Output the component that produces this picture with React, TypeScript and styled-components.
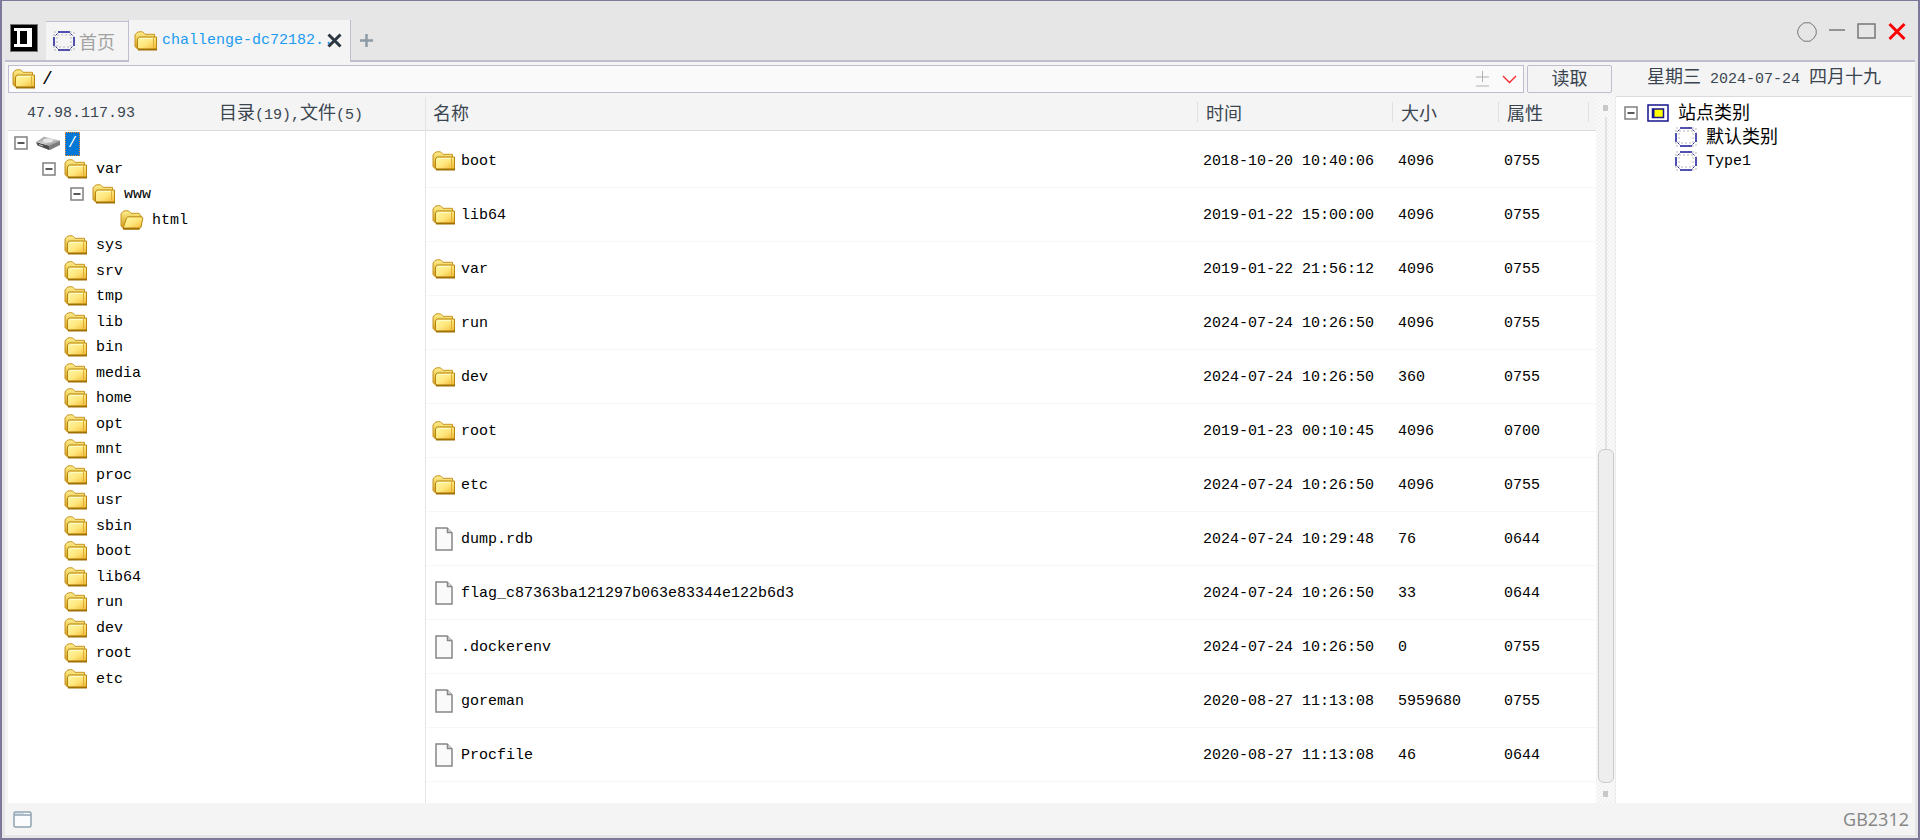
import React from "react";
import styled, { createGlobalStyle, css } from "styled-components";

const color = {
  frame: "#7c799b",
  line: "#c0bdd0",
  rule: "#dcdcde",
  bar: "#e6e6e6",
  panel: "#f4f4f4",
  text: "#3a4550",
};

const GlobalStyle = createGlobalStyle`
  *, *::before, *::after { box-sizing: border-box; }
  body {
    margin: 0;
    font: 15px/20px "Liberation Mono", "Noto Sans CJK SC", monospace;
    color: #000;
  }
  button, input { font: inherit; color: inherit; margin: 0; padding: 0; border: 0; background: none; }
  ul { list-style: none; margin: 0; padding: 0; }
  svg { display: block; flex: none; }
`;

const Window = styled.div`
  display: flex;
  flex-direction: column;
  min-height: 100vh;
  border: 2px solid ${color.frame};
  border-top-width: 1px;
  background: ${color.bar};
  padding: 0 3px 3px;
`;

const TitleBar = styled.header`
  display: flex;
  align-items: flex-end;
  height: 61px;
  padding-left: 5px;
  border-bottom: 2px solid ${color.line};
`;

const Logo = styled.div`
  padding-bottom: 8px;
  margin-right: 8px;
`;

const Tab = styled.div<{ $active?: boolean }>`
  display: flex;
  align-items: center;
  position: relative;
  height: ${(p) => (p.$active ? 42 : 39)}px;
  background: ${color.panel};
  border-top: 1px solid ${color.line};
  color: #a2a2a2;
  padding: 0 13px 0 7px;
  ${(p) =>
    p.$active &&
    css`
      color: #1c9bf2;
      border: 1px solid ${color.line};
      border-width: 0 1px;
      margin-bottom: -2px;
      padding: 0 8px 0 5px;
    `}
`;

const TabButton = styled.button`
  display: flex;
  align-items: center;
  gap: 4px;
  height: 100%;
`;

const TabClose = styled.button`
  position: absolute;
  right: 8px;
  top: 13px;
`;

const AddTab = styled.button`
  padding: 0 0 13px 9px;
`;

const WindowControls = styled.div`
  display: flex;
  align-items: center;
  gap: 12px;
  margin-left: auto;
  padding: 0 9px 18px 0;
`;

const IconButton = styled.button`
  display: flex;
`;

const Workspace = styled.main`
  display: flex;
  flex: 1;
  background: ${color.panel};
  padding: 0 3px;
`;

const Manager = styled.section`
  display: flex;
  flex-direction: column;
  flex: 1;
  min-width: 0;
`;

const Toolbar = styled.form`
  display: flex;
  gap: 3px;
  padding: 3px 4px 4px 0;
`;

const AddressBox = styled.div`
  display: flex;
  align-items: center;
  flex: 1;
  height: 28px;
  padding: 0 6px 0 3px;
  border: 1px solid ${color.line};
  background: #fafafa;
`;

const AddressInput = styled.input`
  flex: 1;
  min-width: 0;
  padding-left: 6px;
  font-size: 18px;
  outline: none;
`;

const AddressTools = styled.div`
  display: flex;
  align-items: center;
  gap: 12px;
`;

const ReadButton = styled.button`
  width: 85px;
  height: 28px;
  border: 1px solid ${color.line};
  border-radius: 2px;
  color: ${color.text};
`;

const Zh = styled.span`
  font-family: "Noto Sans CJK SC", sans-serif;
  font-size: 18px;
  line-height: 20px;
`;

const Split = styled.div`
  display: flex;
  flex: 1;
`;

const TreePane = styled.div`
  display: flex;
  flex-direction: column;
  flex: none;
  width: 417px;
`;

const PaneHead = styled.div`
  display: flex;
  align-items: center;
  height: 34px;
  padding-left: 19px;
  border-bottom: 1px solid ${color.rule};
  color: ${color.text};
`;

const HostName = styled.span`
  width: 192px;
`;

const Tree = styled.ul`
  flex: 1;
  background: #fff;
`;

const TreeRow = styled.li<{ $level: number }>`
  display: flex;
  align-items: center;
  height: 26px;
  padding-left: ${(p) => 6 + p.$level * 28}px;
  &:nth-child(even) { height: 25px; }
`;

const ExpanderSlot = styled.span`
  flex: none;
  width: 14px;
  margin-right: 8px;
  padding-bottom: 2px;
`;

const NodeIcon = styled.span`
  display: flex;
  justify-content: center;
  flex: none;
  width: 24px;
  margin-right: 5px;
  padding-bottom: 2px;
`;

const NodeLabel = styled.span<{ $selected?: boolean }>`
  padding: 0 3px;
  line-height: 24px;
  ${(p) =>
    p.$selected &&
    css`
      color: #fff;
      background: #0078d7;
      outline: 1px dotted #ff8728;
      outline-offset: -1px;
    `}
`;

const ListPane = styled.div`
  flex: 1;
  min-width: 0;
  background: #fff;
  border-left: 1px solid #e4e4e6;
`;

const FileTable = styled.table`
  width: 100%;
  table-layout: fixed;
  border-collapse: separate;
  border-spacing: 0;
`;

const HeadCell = styled.th<{ $width?: number }>`
  width: ${(p) => (p.$width ? `${p.$width}px` : "auto")};
  padding: 0 0 3px;
  font-weight: 400;
  text-align: left;
  color: ${color.text};
`;

const HeadFill = styled.div`
  display: flex;
  align-items: center;
  height: 34px;
  padding-bottom: 4px;
  background: ${color.panel};
  border-bottom: 1px solid ${color.rule};
`;

const HeadLabel = styled.div<{ $divided?: boolean }>`
  display: flex;
  height: 20px;
  padding-left: ${(p) => (p.$divided ? 8 : 6)}px;
  border-left: 1px solid ${(p) => (p.$divided ? "#e0e0e0" : "transparent")};
`;

const Cell = styled.td`
  height: 54px;
  padding: 2px 0 0 6px;
  border-bottom: 1px solid #f7f7f7;
`;

const FileName = styled.div`
  display: flex;
  align-items: center;
`;

const ScrollBar = styled.div`
  display: flex;
  flex-direction: column;
  align-items: center;
  flex: none;
  width: 20px;
  padding: 8px 0 6px;
  border-right: 1px solid #ececec;
  background: repeating-conic-gradient(#f2f2f2 0 25%, #fafafa 0 50%) 0 0 / 4px 4px;
`;

const ScrollEnd = styled.span`
  width: 5px;
  height: 6px;
  background: #c8c8c8;
`;

const ScrollTrack = styled.span`
  flex: 1;
  width: 2px;
  margin-top: 6px;
  background: #e2e2e2;
`;

const ScrollThumb = styled.span`
  flex: 1;
  width: 16px;
  margin-bottom: 8px;
  border: 1px solid #cbcbcb;
  border-radius: 6px;
  background: #eee;
`;

const SitePane = styled.aside`
  display: flex;
  flex-direction: column;
  flex: none;
  width: 296px;
`;

const DateBar = styled.div`
  height: 35px;
  padding-top: 3px;
  line-height: 30px;
  border-bottom: 1px solid ${color.rule};
  text-align: center;
  color: ${color.text};
`;

const SiteTree = styled.ul`
  flex: 1;
  padding-top: 5px;
  background: #fff;
`;

const SiteRow = styled.li<{ $level: number }>`
  display: flex;
  align-items: center;
  height: 24px;
  padding-left: ${(p) => 8 + p.$level * 28}px;
`;

const StatusBar = styled.footer`
  display: flex;
  align-items: center;
  justify-content: space-between;
  height: 32px;
  padding: 0 6px 0 8px;
  background: ${color.panel};
`;

const Encoding = styled.span`
  font: 18px/24px "Open Sans", sans-serif;
  color: #858585;
`;

const Gradients = styled.svg`
  position: absolute;
`;

const FolderDefs = () => (
  <Gradients width="0" height="0" aria-hidden="true">
    <linearGradient id="folderFront" x1="0" y1="0" x2="1" y2="1">
      <stop offset="0" stopColor="#fff9a8" />
      <stop offset="0.5" stopColor="#ffe77e" />
      <stop offset="1" stopColor="#f2b62c" />
    </linearGradient>
    <linearGradient id="folderBack" x1="0" y1="0" x2="0" y2="1">
      <stop offset="0" stopColor="#fff08e" />
      <stop offset="1" stopColor="#cf9512" />
    </linearGradient>
    <linearGradient id="driveTop" x1="0" y1="0" x2="1" y2="1">
      <stop offset="0" stopColor="#8a8a8a" />
      <stop offset="0.5" stopColor="#d0d0d0" />
      <stop offset="1" stopColor="#6e6e6e" />
    </linearGradient>
  </Gradients>
);

const FolderIcon = () => (
  <svg width="24" height="20" viewBox="0 0 24 20">
    <path d="M1 15.5V4L3 1.5 5 .8h3.500L11 3.300h9.500V16L4 18.500Z" fill="url(#folderBack)" stroke="#c79422" />
    <path d="M3.500 17V8L5 6h17.500v12.500H5Z" fill="url(#folderFront)" stroke="#b8860f" />
    <path d="M4 18.500h19" stroke="#a07005" strokeWidth="2" />
    <path d="M19.500 7v9.500" stroke="#dcae3c" />
    <path d="M6 7.500h13" stroke="#fffbc8" />
  </svg>
);

const OpenFolderIcon = () => (
  <svg width="24" height="20" viewBox="0 0 24 20">
    <path d="M1 16V4L3 1.500 5 .8h3.500L11 3.300h8L21 6v11L4 18.500Z" fill="url(#folderBack)" stroke="#c79422" />
    <path d="M3 18.500 6.500 8 8 6.800h14l.8 1.700-2 9-1.800 1.500H4Z" fill="url(#folderFront)" stroke="#b8860f" />
    <path d="M3 18.600h16.500" stroke="#a07005" strokeWidth="2" />
  </svg>
);

const DriveIcon = () => (
  <svg width="24" height="14" viewBox="0 0 24 14">
    <path d="M0 6 13 9.500V14L1.500 9.500Z" fill="#4c4c4c" />
    <path d="M13 9.500 24 4.500v4.500L14 14H13Z" fill="#7d7d7d" />
    <path d="M0 6 8 .8 23.500 4.500 13 9.800Z" fill="url(#driveTop)" />
    <ellipse cx="12" cy="4.500" rx="5" ry="2" fill="#e6e6e6" />
    <path d="M3 8.500 7 10" stroke="#c5c5c5" />
  </svg>
);

const FileIcon = () => (
  <svg width="18" height="24" viewBox="0 0 18 24">
    <path d="M1 1h11l5 5v17H1Z" fill="#fafafa" stroke="#868686" strokeWidth="1.500" />
    <path d="M12.500 1v4.500H17" fill="#ddd" stroke="#868686" strokeWidth="1.500" />
  </svg>
);

const Expander = () => (
  <svg width="14" height="14" viewBox="0 0 14 14">
    <rect x="1" y="1" width="12" height="12" fill="#fff" stroke="#808080" strokeWidth="1.500" />
    <path d="M3.500 7h7" stroke="#222" strokeWidth="1.500" />
  </svg>
);

const SiteIcon = () => (
  <svg width="22" height="20" viewBox="0 0 22 20" fill="none">
    <rect x="1" y="1" width="20" height="18" stroke="#b9b9b9" strokeDasharray="2 2" />
    <rect x="4" y="4" width="14" height="12" stroke="#b9b9b9" strokeDasharray="2 2" />
    <path d="M5 1h12M5 19h12M1 6v9M21 6v9" stroke="#1f1f9c" strokeWidth="1.500" />
    <path d="m2.500 4.500 2-2M17.500 2.500l2 2M2.500 15.500l2 2M17.500 17.500l2-2" stroke="#3333a8" />
  </svg>
);

const CategoryIcon = () => (
  <svg width="22" height="18" viewBox="0 0 22 18">
    <rect x="1" y="1" width="20" height="16" fill="#fff" stroke="#14148c" strokeWidth="1.500" />
    <rect x="5.500" y="5" width="11" height="8.500" fill="#ff0" stroke="#14148c" strokeWidth="1.500" />
    <path d="M6.500 5v8" stroke="#14148c" strokeWidth="2" />
  </svg>
);

const treeNodes: { name: string; level: number; open?: boolean; kind?: "drive" | "opened" }[] = [
  { name: "/", level: 0, open: true, kind: "drive" },
  { name: "var", level: 1, open: true },
  { name: "www", level: 2, open: true },
  { name: "html", level: 3, kind: "opened" },
  ...[
    "sys", "srv", "tmp", "lib", "bin", "media", "home", "opt", "mnt",
    "proc", "usr", "sbin", "boot", "lib64", "run", "dev", "root", "etc",
  ].map((name) => ({ name, level: 1 })),
];

const files = [
  { name: "boot", dir: true, time: "2018-10-20 10:40:06", size: "4096", mode: "0755" },
  { name: "lib64", dir: true, time: "2019-01-22 15:00:00", size: "4096", mode: "0755" },
  { name: "var", dir: true, time: "2019-01-22 21:56:12", size: "4096", mode: "0755" },
  { name: "run", dir: true, time: "2024-07-24 10:26:50", size: "4096", mode: "0755" },
  { name: "dev", dir: true, time: "2024-07-24 10:26:50", size: "360", mode: "0755" },
  { name: "root", dir: true, time: "2019-01-23 00:10:45", size: "4096", mode: "0700" },
  { name: "etc", dir: true, time: "2024-07-24 10:26:50", size: "4096", mode: "0755" },
  { name: "dump.rdb", dir: false, time: "2024-07-24 10:29:48", size: "76", mode: "0644" },
  { name: "flag_c87363ba121297b063e83344e122b6d3", dir: false, time: "2024-07-24 10:26:50", size: "33", mode: "0644" },
  { name: ".dockerenv", dir: false, time: "2024-07-24 10:26:50", size: "0", mode: "0755" },
  { name: "goreman", dir: false, time: "2020-08-27 11:13:08", size: "5959680", mode: "0755" },
  { name: "Procfile", dir: false, time: "2020-08-27 11:13:08", size: "46", mode: "0644" },
];

const columns: { label: string; width?: number }[] = [
  { label: "名称" },
  { label: "时间", width: 195 },
  { label: "大小", width: 106 },
  { label: "属性", width: 90 },
  { label: "", width: 8 },
];

export default function App() {
  return (
    <Window>
      <GlobalStyle />
      <FolderDefs />
      <TitleBar>
        <Logo>
          <svg width="28" height="28" viewBox="0 0 28 28">
            <rect x="0.500" y="0.500" width="27" height="27" fill="#000" stroke="#777" />
            <path d="M4 4h18v19H4v-3h3V7H4Z" fill="#fff" />
            <path d="M10 7h7v13h-7Z" fill="#000" />
          </svg>
        </Logo>
        <Tab>
          <TabButton type="button">
            <SiteIcon />
            <Zh>首页</Zh>
          </TabButton>
        </Tab>
        <Tab $active>
          <TabButton type="button">
            <FolderIcon />
            challenge-dc72182...
          </TabButton>
          <TabClose type="button" aria-label="关闭标签">
            <svg width="15" height="15" viewBox="0 0 15 15">
              <path d="m1.500 1.500 12 12M13.500 1.500l-12 12" stroke="#2c3640" strokeWidth="3" />
            </svg>
          </TabClose>
        </Tab>
        <AddTab type="button" aria-label="新建标签">
          <svg width="13" height="13" viewBox="0 0 13 13">
            <path d="M6.500 0v13M0 6.500h13" stroke="#8c9ba5" strokeWidth="2.500" />
          </svg>
        </AddTab>
        <WindowControls>
          <IconButton type="button" aria-label="皮肤">
            <svg width="20" height="20" viewBox="0 0 20 20">
              <path d="M7 .8h6L17 4l2.200 4v4L17 16l-4 3.200H7L3 16 .8 12V8L3 4Z" fill="none" stroke="#777" />
            </svg>
          </IconButton>
          <IconButton type="button" aria-label="最小化">
            <svg width="16" height="20" viewBox="0 0 16 20">
              <path d="M0 8h16" stroke="#777" strokeWidth="1.500" />
            </svg>
          </IconButton>
          <IconButton type="button" aria-label="最大化">
            <svg width="19" height="20" viewBox="0 0 19 20">
              <rect x="1" y="2" width="17" height="14" fill="none" stroke="#777" strokeWidth="1.500" />
            </svg>
          </IconButton>
          <IconButton type="button" aria-label="关闭">
            <svg width="18" height="20" viewBox="0 0 18 20">
              <path d="m1.500 2 15 15M16.500 2l-15 15" stroke="#f00" strokeWidth="3" />
            </svg>
          </IconButton>
        </WindowControls>
      </TitleBar>

      <Workspace>
        <Manager>
          <Toolbar onSubmit={(e: React.FormEvent) => e.preventDefault()}>
            <AddressBox>
              <FolderIcon />
              <AddressInput aria-label="路径" defaultValue="/" />
              <AddressTools>
                <IconButton type="button" aria-label="书签">
                  <svg width="15" height="16" viewBox="0 0 15 16">
                    <path d="M7.500 0v11M1 6h13M1 15h13" stroke="#b0b0b0" />
                  </svg>
                </IconButton>
                <IconButton type="button" aria-label="历史路径">
                  <svg width="15" height="9" viewBox="0 0 15 9">
                    <path d="m1 1 6.500 6.500L14 1" fill="none" stroke="#f22" strokeWidth="1.300" />
                  </svg>
                </IconButton>
              </AddressTools>
            </AddressBox>
            <ReadButton type="submit">
              <Zh>读取</Zh>
            </ReadButton>
          </Toolbar>

          <Split>
            <TreePane>
              <PaneHead>
                <HostName>47.98.117.93</HostName>
                <span>
                  <Zh>目录</Zh>(19),<Zh>文件</Zh>(5)
                </span>
              </PaneHead>
              <Tree>
                {treeNodes.map((node) => (
                  <TreeRow key={node.name} $level={node.level}>
                    <ExpanderSlot>{node.open && <Expander />}</ExpanderSlot>
                    <NodeIcon>
                      {node.kind === "drive" ? <DriveIcon /> : node.kind === "opened" ? <OpenFolderIcon /> : <FolderIcon />}
                    </NodeIcon>
                    <NodeLabel $selected={node.kind === "drive"}>{node.name}</NodeLabel>
                  </TreeRow>
                ))}
              </Tree>
            </TreePane>

            <ListPane>
              <FileTable>
                <thead>
                  <tr>
                    {columns.map((col, i) => (
                      <HeadCell key={col.label} $width={col.width}>
                        <HeadFill>
                          <HeadLabel $divided={i > 0}>
                            <Zh>{col.label}</Zh>
                          </HeadLabel>
                        </HeadFill>
                      </HeadCell>
                    ))}
                  </tr>
                </thead>
                <tbody>
                  {files.map((file) => (
                    <tr key={file.name}>
                      <Cell>
                        <FileName>
                          <NodeIcon>{file.dir ? <FolderIcon /> : <FileIcon />}</NodeIcon>
                          {file.name}
                        </FileName>
                      </Cell>
                      <Cell>{file.time}</Cell>
                      <Cell>{file.size}</Cell>
                      <Cell>{file.mode}</Cell>
                      <Cell />
                    </tr>
                  ))}
                </tbody>
              </FileTable>
            </ListPane>

            <ScrollBar aria-hidden="true">
              <ScrollEnd />
              <ScrollTrack />
              <ScrollThumb />
              <ScrollEnd />
            </ScrollBar>
          </Split>
        </Manager>

        <SitePane>
          <DateBar>
            <Zh>星期三</Zh> 2024-07-24 <Zh>四月十九</Zh>
          </DateBar>
          <SiteTree>
            <SiteRow $level={0}>
              <ExpanderSlot>
                <Expander />
              </ExpanderSlot>
              <NodeIcon>
                <CategoryIcon />
              </NodeIcon>
              <NodeLabel>
                <Zh>站点类别</Zh>
              </NodeLabel>
            </SiteRow>
            <SiteRow $level={1}>
              <ExpanderSlot />
              <NodeIcon>
                <SiteIcon />
              </NodeIcon>
              <NodeLabel>
                <Zh>默认类别</Zh>
              </NodeLabel>
            </SiteRow>
            <SiteRow $level={1}>
              <ExpanderSlot />
              <NodeIcon>
                <SiteIcon />
              </NodeIcon>
              <NodeLabel>Type1</NodeLabel>
            </SiteRow>
          </SiteTree>
        </SitePane>
      </Workspace>

      <StatusBar>
        <IconButton type="button" aria-label="窗口">
          <svg width="19" height="17" viewBox="0 0 19 17">
            <rect x="1" y="1" width="17" height="15" rx="1.500" fill="#fafcfd" stroke="#8fa3b0" strokeWidth="1.500" />
            <path d="M1 4h17" stroke="#8fa3b0" strokeWidth="1.500" />
            <path d="M2 2.500h9" stroke="#cfe0ea" />
          </svg>
        </IconButton>
        <Encoding>GB2312</Encoding>
      </StatusBar>
    </Window>
  );
}
